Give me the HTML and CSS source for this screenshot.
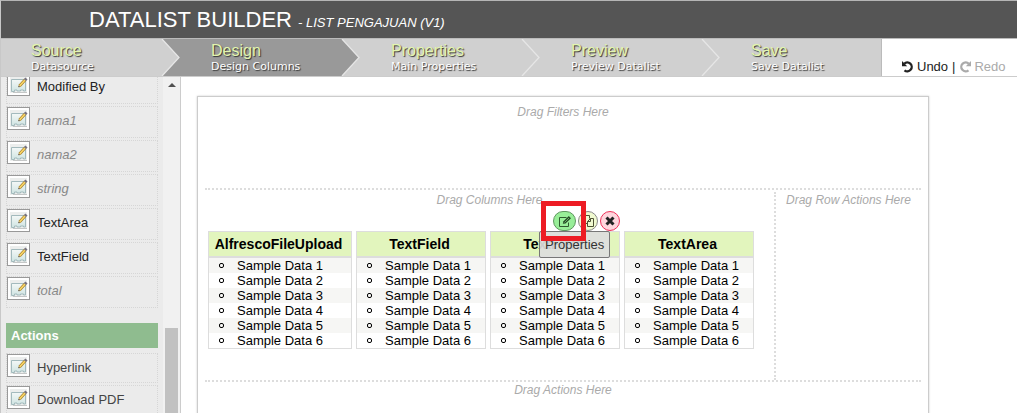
FILE: index.html
```html
<!DOCTYPE html>
<html lang="en">
<head>
<meta charset="utf-8">
<title>Datalist Builder</title>
<link rel="stylesheet" href="styles.css">
</head>
<body>
<svg class="defs" aria-hidden="true">
  <defs>
    <linearGradient id="sheet" x1="0" y1="0" x2="0" y2="1">
      <stop offset="0" stop-color="#f4f8f7"/><stop offset="1" stop-color="#cfe4e2"/>
    </linearGradient>
    <symbol id="edit" viewBox="0 0 21 21">
      <rect width="21" height="21" fill="#fff"/>
      <rect x="2" y="2" width="17" height="17" fill="#eceeed"/>
      <path d="M5 5.500H17.500V17H15.500V16H12.500V17H9V16H6.500V17.500H3.500V5.500Z" fill="url(#sheet)" stroke="#a3babd"/>
      <path d="M5 18.500H19" fill="none" stroke="#c5c7c7"/>
      <path d="M11.500 12 17 6" stroke="#a8812c" stroke-width="3"/>
      <path d="M11.500 12 17 6" stroke="#fbd868" stroke-width="1.600"/>
      <path d="M17 6 18.500 4.500" stroke="#77727e" stroke-width="3"/>
      <path d="M10.500 13 11.500 12" stroke="#6d5c43" stroke-width="1.500"/>
    </symbol>
    <symbol id="turn" viewBox="0 0 12 12">
      <path d="M2.200 2.800A4.400 4.400 0 1 1 2.500 9.300" fill="none" stroke="currentColor" stroke-width="2.300"/>
      <path d="M0 0V5.200H5.200Z" fill="currentColor"/>
    </symbol>
  </defs>
</svg>
<div class="app">
  <header class="header">
    <h1 class="title">DATALIST BUILDER <em class="subtitle">- LIST PENGAJUAN (V1)</em></h1>
  </header>
  <nav class="nav">
    <ol class="steps">
      <li class="step"><a class="step-link" href="#source"><span class="step-name">Source</span><span class="step-note">Datasource</span></a>
        <svg class="arrow" viewBox="0 0 20 37"><path class="fill-active" d="M1 0H20V37H1L18 18.500Z"/><path class="edge" d="M1 0 18 18.500 1 37"/></svg></li>
      <li class="step active"><a class="step-link" href="#design"><span class="step-name">Design</span><span class="step-note">Design Columns</span></a>
        <svg class="arrow" viewBox="0 0 20 37"><path class="fill-idle" d="M1 0H20V37H1L18 18.500Z"/><path class="edge" d="M1 0 18 18.500 1 37"/></svg></li>
      <li class="step"><a class="step-link" href="#properties"><span class="step-name">Properties</span><span class="step-note">Main Properties</span></a>
        <svg class="arrow" viewBox="0 0 20 37"><path class="edge" d="M1 0 18 18.500 1 37"/></svg></li>
      <li class="step"><a class="step-link" href="#preview"><span class="step-name">Preview</span><span class="step-note">Preview Datalist</span></a>
        <svg class="arrow" viewBox="0 0 20 37"><path class="edge" d="M1 0 18 18.500 1 37"/></svg></li>
      <li class="step last"><a class="step-link" href="#save"><span class="step-name">Save</span><span class="step-note">Save Datalist</span></a></li>
    </ol>
    <div class="history">
      <button class="history-button" type="button"><svg class="turn"><use href="#turn"/></svg>Undo</button>
      <span>|</span>
      <button class="history-button" type="button" disabled><svg class="turn flip"><use href="#turn"/></svg>Redo</button>
    </div>
  </nav>
  <div class="main">
    <aside class="sidebar">
      <div class="palette">
        <ul class="items fields">
          <li class="item"><svg class="icon"><use href="#edit"/></svg>Modified By</li>
          <li class="item used"><svg class="icon"><use href="#edit"/></svg>nama1</li>
          <li class="item used"><svg class="icon"><use href="#edit"/></svg>nama2</li>
          <li class="item used"><svg class="icon"><use href="#edit"/></svg>string</li>
          <li class="item"><svg class="icon"><use href="#edit"/></svg>TextArea</li>
          <li class="item"><svg class="icon"><use href="#edit"/></svg>TextField</li>
          <li class="item used"><svg class="icon"><use href="#edit"/></svg>total</li>
        </ul>
        <h2 class="group">Actions</h2>
        <ul class="items actions">
          <li class="item"><svg class="icon"><use href="#edit"/></svg>Hyperlink</li>
          <li class="item"><svg class="icon"><use href="#edit"/></svg>Download PDF</li>
        </ul>
      </div>
      <div class="scrollbar"><svg class="up" viewBox="0 0 8 4"><path d="M0 4 4 0 8 4Z" fill="#505050"/></svg><div class="thumb"></div></div>
    </aside>
    <main class="canvas">
      <section class="filters"><p class="hint">Drag Filters Here</p></section>
      <div class="middle">
        <section class="columns">
          <p class="hint">Drag Columns Here</p>
          <div class="tables">
            <table class="column wide"><thead><tr><th>AlfrescoFileUpload</th></tr></thead><tbody>
              <tr><td><span class="sample">Sample Data 1</span></td></tr><tr><td><span class="sample">Sample Data 2</span></td></tr><tr><td><span class="sample">Sample Data 3</span></td></tr><tr><td><span class="sample">Sample Data 4</span></td></tr><tr><td><span class="sample">Sample Data 5</span></td></tr><tr><td><span class="sample">Sample Data 6</span></td></tr></tbody></table>
            <table class="column"><thead><tr><th>TextField</th></tr></thead><tbody>
              <tr><td><span class="sample">Sample Data 1</span></td></tr><tr><td><span class="sample">Sample Data 2</span></td></tr><tr><td><span class="sample">Sample Data 3</span></td></tr><tr><td><span class="sample">Sample Data 4</span></td></tr><tr><td><span class="sample">Sample Data 5</span></td></tr><tr><td><span class="sample">Sample Data 6</span></td></tr></tbody></table>
            <div class="selected">
              <table class="column"><thead><tr><th>TextField</th></tr></thead><tbody>
                <tr><td><span class="sample">Sample Data 1</span></td></tr><tr><td><span class="sample">Sample Data 2</span></td></tr><tr><td><span class="sample">Sample Data 3</span></td></tr><tr><td><span class="sample">Sample Data 4</span></td></tr><tr><td><span class="sample">Sample Data 5</span></td></tr><tr><td><span class="sample">Sample Data 6</span></td></tr></tbody></table>
              <div class="tools">
                <button class="tool tool-edit" type="button" aria-label="Properties"><svg class="tool-icon wide-icon" viewBox="0 0 14 12"><path d="M10.500 7.500V11.500H1.500V2.500H8.500" fill="none" stroke="#2f5a2f"/><path d="M4.800 8.800 5.500 6.300 10.800 1 13 3.200 7.500 8.500Z" fill="#244b24"/><path d="M6.500 7.500 11 3" stroke="#9be79b" stroke-width=".6"/></svg></button>
                <button class="tool tool-copy" type="button" aria-label="Copy"><svg class="tool-icon" viewBox="0 0 12 12"><path d="M5.500 8.500H.500V3.500L3.500 .500H7.500V3.500M3.500 .500V3.500H.500M5.500 6.500 8.500 3.500H11.500V11.500H5.500ZM8.500 3.500V6.500H5.500" fill="none" stroke="#4c5034"/></svg></button>
                <button class="tool tool-delete" type="button" aria-label="Delete"><svg class="tool-icon" viewBox="0 0 12 12"><path d="M2.500 2.500 9.500 9.500M9.500 2.500 2.500 9.500" stroke="#222" stroke-width="3"/></svg></button>
              </div>
              <div class="tooltip" role="tooltip">Properties</div>
              <div class="marker"></div>
            </div>
            <table class="column"><thead><tr><th>TextArea</th></tr></thead><tbody>
              <tr><td><span class="sample">Sample Data 1</span></td></tr><tr><td><span class="sample">Sample Data 2</span></td></tr><tr><td><span class="sample">Sample Data 3</span></td></tr><tr><td><span class="sample">Sample Data 4</span></td></tr><tr><td><span class="sample">Sample Data 5</span></td></tr><tr><td><span class="sample">Sample Data 6</span></td></tr></tbody></table>
          </div>
        </section>
        <section class="row-actions"><p class="hint">Drag Row Actions Here</p></section>
      </div>
      <section class="list-actions"><p class="hint">Drag Actions Here</p></section>
    </main>
  </div>
</div>
</body>
</html>
```
FILE: styles.css
```css
*, *::before { box-sizing: border-box; }
body {
  margin: 0;
  background: #fff;
  color: #222;
  font: 13px/15px "Liberation Sans", Arial, sans-serif;
}
h1, h2, p, ol, ul { margin: 0; padding: 0; }
ol, ul { list-style: none; }
button { border: 0; padding: 0; background: none; color: inherit; font: inherit; }
.defs { position: absolute; width: 0; height: 0; }

.app {
  display: flex;
  flex-direction: column;
  height: 100vh;
  overflow: hidden;
  border-top: 1px solid #b5b5b5;
  border-left: 1px solid #c8c8c8;
}
.header {
  padding: 4px 88px 0;
  background: #555;
  color: #fff;
}
.title { font-size: 22px; font-weight: normal; line-height: 30px; }
.subtitle { font-size: 13px; }

.nav {
  display: flex;
  border-top: 1px solid #bbb;
  border-bottom: 1px solid #ccc;
}
.steps { display: flex; background: #d0d0d0; border-right: 1px solid #bbb; }
.step {
  display: flex;
  justify-content: space-between;
  width: 180px;
  height: 37px;
  padding-left: 30px;
}
.step.active { background: #999; }
.step.last { width: 160px; }
.step-link {
  padding-top: 3px;
  color: #fff;
  text-decoration: none;
  text-shadow: 1px 1px 1px #333;
  white-space: nowrap;
}
.step-name { display: block; color: #e3f5ae; font-size: 16px; line-height: 17px; }
.step-note { display: block; font: 11px/16px "DejaVu Sans", sans-serif; }
.arrow { width: 20px; height: 37px; }
.fill-active { fill: #999; }
.fill-idle { fill: #d0d0d0; }
.edge { fill: none; stroke: #e6e6e6; stroke-width: 1.3; }
.history {
  display: flex;
  flex: 1;
  align-items: flex-end;
  gap: 4px;
  padding: 0 0 2px 20px;
}
.history-button { display: flex; align-items: center; gap: 3px; }
.history-button:disabled { color: #aaa; }
.turn { width: 12px; height: 12px; }
.flip { transform: scaleX(-1); }

.main { display: flex; flex: 1; min-height: 0; }
.sidebar {
  display: flex;
  width: 180px;
  background: #ebebeb;
  border-right: 1px solid #ccc;
}
.palette { flex: 1; overflow: hidden; padding: 0 5px; }
.items { display: flex; flex-direction: column; gap: 2px; }
.fields { margin-top: -5px; }
.item {
  display: flex;
  align-items: flex-start;
  gap: 7px;
  height: 32px;
  border: 1px dotted #d6d6d6;
  line-height: 27px;
}
.used { color: #888; font-style: italic; }
.icon { width: 23px; height: 23px; border: 1px solid #999; }
.group {
  margin: 15px 0 5px;
  padding: 5px;
  background: #8fbc8f;
  color: #fff;
  font-size: 13px;
  line-height: 15px;
}
.actions .item { height: 30px; color: #444; }
.scrollbar {
  display: flex;
  flex-direction: column;
  align-items: center;
  width: 17px;
  padding: 6px 2px 0;
  background: #f1f1f1;
}
.up { width: 8px; height: 4px; margin-bottom: 241px; }
.thumb { width: 13px; flex: 1; background: #c1c1c1; }

.canvas {
  width: 732px;
  height: 400px;
  margin: 19px 16px;
  padding: 7px;
  border: 1px solid #ccc;
  box-shadow: 0 0 2px #ccc;
}
.hint {
  color: #aaa;
  font-size: 12px;
  font-style: italic;
  line-height: 16px;
  text-align: center;
}
.filters { height: 86px; border-bottom: 2px dotted #ddd; }
.middle { display: flex; padding-top: 2px; border-bottom: 2px dotted #ddd; }
.columns { flex: 1; }
.row-actions { width: 147px; border-left: 2px dotted #ddd; }
.tables { display: flex; gap: 4px; padding: 23px 3px 31px; }
.column {
  width: 130px;
  border: 1px solid #ddd;
  border-spacing: 0;
  color: #000;
}
.wide { width: 144px; }
.column th {
  height: 26px;
  padding: 0 7px 0 4px;
  background: #e2f5bd;
  border-bottom: 2px solid #ddd;
  font-size: 14px;
  text-align: center;
}
.column td { height: 15px; padding: 0 0 0 10px; }
.sample { display: flex; align-items: center; gap: 13px; }
.sample::before {
  width: 5px;
  height: 5px;
  border: 1px solid #000;
  border-radius: 2px;
  content: "";
}
.column tbody tr:nth-child(odd) { background: #f6f6f4; }

.selected { position: relative; }
.tools {
  position: absolute;
  top: -20px;
  right: 0;
  display: flex;
  gap: 2px;
}
.tool {
  display: flex;
  align-items: center;
  justify-content: center;
  width: 20px;
  height: 20px;
  border: 1px solid #888;
  border-radius: 10px;
  background: #f0fad0;
}
.tool-edit { width: 23px; background: #98ee98; border-color: #5f965f; }
.tool-delete { background: #ffd5dc; border-color: #f03058; }
.tool-icon { width: 12px; height: 12px; }
.wide-icon { width: 14px; }
.tooltip {
  position: absolute;
  top: 0;
  left: 49px;
  padding: 5px;
  border: 1px solid #777;
  border-radius: 2px;
  background: rgba(221, 221, 221, .92);
  color: #333;
}
.marker {
  position: absolute;
  top: -30px;
  left: 51px;
  width: 45px;
  height: 40px;
  border: 5px solid #ed1c24;
}
```
